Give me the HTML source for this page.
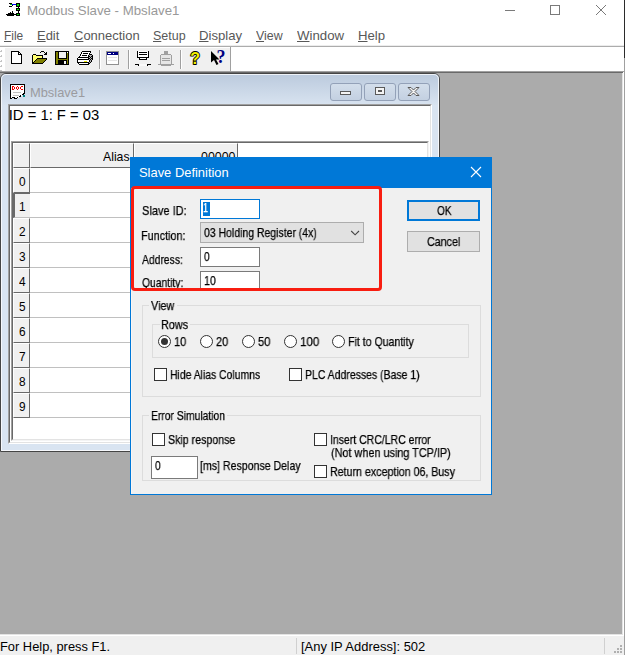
<!DOCTYPE html>
<html><head><meta charset="utf-8">
<style>
*{box-sizing:border-box;margin:0;padding:0}
html,body{width:625px;height:655px;overflow:hidden;background:#fff}
body{position:relative;font-family:"Liberation Sans",sans-serif;color:#000}
.a{position:absolute}
.t{position:absolute;display:block;white-space:nowrap;line-height:1;transform-origin:0 0}
.t u{text-decoration:underline;text-decoration-thickness:1px;text-underline-offset:1px}
svg{position:absolute;overflow:visible}
.cr{shape-rendering:crispEdges}
.inp{position:absolute;background:#fff;border:1px solid #7a7a7a}
.btn{position:absolute;background:#e1e1e1;border:1px solid #adadad}
.grp{position:absolute;border:1px solid #dcdcdc}
.lbg{position:absolute;background:#f0f0f0;height:12px}
.cb{position:absolute;width:13px;height:13px;background:#fff;border:1px solid #333}
.rb{position:absolute;width:13px;height:13px;background:#fff;border:1px solid #333;border-radius:50%}
.hc{position:absolute;background:#f0f0f0;border-right:1px solid #696969;border-bottom:1px solid #696969;border-top:1px solid #fff;border-left:1px solid #fff}
.hl{position:absolute;height:1px;background:#c0c0c0}
.sep{position:absolute;top:50px;width:2px;height:19px;border-left:1px solid #a0a0a0;border-right:1px solid #fff}
</style></head><body>
<!-- ===== main window chrome ===== -->
<svg class="cr" style="left:0;top:0" width="625" height="24">
  <!-- app icon -->
  <rect x="9" y="3" width="3" height="1" fill="#000"/><rect x="9" y="6" width="3" height="1" fill="#000"/>
  <rect x="10" y="4" width="2" height="1" fill="#00c000"/><rect x="12" y="5" width="1" height="1" fill="#000"/>
  <rect x="12" y="4" width="4" height="1" fill="#0000ff"/>
  <rect x="16" y="3" width="4" height="4" fill="#000"/><rect x="17" y="4" width="2" height="2" fill="#00e000"/>
  <rect x="18" y="7" width="1" height="1" fill="#000"/>
  <rect x="16" y="8" width="4" height="3" fill="#000"/><rect x="17" y="9" width="2" height="1" fill="#00e000"/>
  <rect x="18" y="11" width="1" height="2" fill="#000"/>
  <rect x="16" y="13" width="4" height="3" fill="#000"/><rect x="17" y="14" width="2" height="1" fill="#00e000"/>
  <rect x="6" y="14" width="10" height="1" fill="#000"/><rect x="7" y="15" width="7" height="1" fill="#000"/>
  <rect x="8" y="13" width="6" height="1" fill="#000"/><rect x="10" y="12" width="1" height="1" fill="#000"/><rect x="12" y="11" width="1" height="2" fill="#000"/>
  <!-- caption buttons -->
  <rect x="505" y="10" width="10" height="1" fill="#7a7a7a"/>
  <rect x="550.5" y="5.5" width="9" height="9" fill="none" stroke="#7a7a7a" stroke-width="1"/>
</svg>
<svg style="left:596px;top:5px" width="10" height="10"><path d="M0 0L10 10M10 0L0 10" stroke="#7a7a7a" stroke-width="1" fill="none"/></svg>
<div class="a" style="left:0;top:45px;width:624px;height:1px;background:#ececec"></div>
<div class="a" style="left:0;top:46px;width:624px;height:1px;background:#acacac"></div>
<!-- toolbar -->
<div class="a" style="left:5px;top:48px;width:225px;height:23px;background:#f0f0f0"></div>
<div class="a" style="left:230px;top:47px;width:1px;height:24px;background:#a0a0a0"></div>
<svg class="cr" style="left:0;top:47px" width="232" height="24">
<!-- gripper -->
<g fill="#c4c4c4"><rect x="0" y="4" width="2" height="1"/><rect x="1" y="3" width="1" height="1"/><rect x="0" y="9" width="2" height="1"/><rect x="1" y="8" width="1" height="1"/><rect x="0" y="14" width="2" height="1"/><rect x="1" y="13" width="1" height="1"/><rect x="0" y="19" width="2" height="1"/><rect x="1" y="18" width="1" height="1"/><rect x="0" y="23" width="2" height="1"/></g>
<!-- new -->
<path d="M11.500 4.500H18.500L21.500 7.500V16.500H11.500Z" fill="#fff" stroke="#000" stroke-width="1"/>
<path d="M18.500 4.500V7.500H21.500" fill="none" stroke="#000" stroke-width="1"/>
<!-- open -->
<path d="M33 8H42V11H37L33 15Z" fill="#ffff70"/>
<g fill="#000"><rect x="32" y="8" width="1" height="9"/><rect x="33" y="7" width="3" height="1"/><rect x="36" y="8" width="7" height="1"/><rect x="42" y="8" width="1" height="3"/></g>
<path d="M33 16L37 12H47L43 16Z" fill="#808000"/>
<g fill="#000"><rect x="37" y="11" width="10" height="1"/><rect x="32" y="16" width="11" height="1"/>
<rect x="36" y="12" width="1" height="1"/><rect x="35" y="13" width="1" height="1"/><rect x="34" y="14" width="1" height="1"/><rect x="33" y="15" width="1" height="1"/>
<rect x="46" y="12" width="1" height="1"/><rect x="45" y="13" width="1" height="1"/><rect x="44" y="14" width="1" height="1"/><rect x="43" y="15" width="1" height="1"/>
<rect x="40" y="5" width="1" height="1"/><rect x="41" y="4" width="3" height="1"/><rect x="44" y="5" width="1" height="1"/><rect x="45" y="6" width="1" height="2"/>
<rect x="46" y="5" width="1" height="3"/><rect x="44" y="7" width="1" height="1"/></g>
<!-- save -->
<rect x="55" y="4" width="14" height="14" fill="#000"/>
<rect x="56" y="5" width="12" height="12" fill="#808000"/>
<rect x="58" y="4" width="9" height="8" fill="#000"/>
<rect x="59" y="5" width="7" height="6" fill="#f2f2f2"/>
<rect x="67" y="5" width="1" height="1" fill="#fff"/>
<rect x="58" y="13" width="9" height="5" fill="#000"/>
<rect x="64" y="14" width="2" height="3" fill="#f4f4f4"/>
<!-- print -->
<path d="M82 5H90L88 10H79Z" fill="#fff"/>
<rect x="78" y="11" width="11" height="6" fill="#fff"/>
<path d="M89 8H92V13L89 17Z" fill="#b0b0b0"/>
<g fill="#000">
<rect x="82" y="4" width="9" height="1"/><rect x="81" y="5" width="1" height="2"/><rect x="90" y="5" width="1" height="1"/>
<rect x="83" y="6" width="5" height="1"/><rect x="89" y="6" width="1" height="2"/><rect x="80" y="7" width="1" height="2"/>
<rect x="82" y="8" width="5" height="1"/><rect x="88" y="8" width="1" height="2"/><rect x="79" y="9" width="1" height="1"/>
<rect x="78" y="10" width="11" height="1"/><rect x="77" y="11" width="1" height="5"/><rect x="88" y="11" width="1" height="1"/>
<rect x="77" y="12" width="12" height="1"/><rect x="89" y="13" width="1" height="2"/><rect x="77" y="15" width="12" height="1"/>
<rect x="78" y="16" width="1" height="1"/><rect x="88" y="16" width="1" height="1"/><rect x="79" y="17" width="10" height="1"/>
<rect x="90" y="7" width="2" height="1"/><rect x="92" y="8" width="1" height="5"/><rect x="91" y="13" width="1" height="2"/><rect x="90" y="15" width="1" height="1"/><rect x="89" y="16" width="1" height="1"/>
<rect x="89" y="9" width="1" height="1"/><rect x="91" y="9" width="1" height="1"/><rect x="90" y="10" width="1" height="1"/><rect x="89" y="11" width="1" height="1"/><rect x="91" y="11" width="1" height="1"/><rect x="90" y="12" width="1" height="1"/>
</g>
<rect x="84" y="14" width="3" height="1" fill="#e8e800"/>
<!-- window -->
<rect x="106.500" y="4.500" width="12" height="13" fill="#fff" stroke="#909090" stroke-width="1"/>
<rect x="107" y="5" width="11" height="3" fill="#000080"/>
<rect x="108" y="6" width="3" height="1" fill="#fff"/><rect x="113" y="6" width="1" height="1" fill="#fff"/>
<rect x="108" y="10" width="9" height="1" fill="#e4e4e4"/><rect x="108" y="13" width="9" height="1" fill="#e4e4e4"/>
<!-- connect -->
<rect x="138" y="4" width="10" height="6" fill="#fff"/><rect x="140" y="11" width="6" height="1" fill="#fff"/><rect x="139" y="17" width="8" height="2" fill="#fafafa"/>
<g fill="#000"><rect x="137" y="4" width="1" height="7"/><rect x="148" y="4" width="1" height="7"/><rect x="137" y="10" width="12" height="1"/>
<rect x="139" y="5" width="8" height="1"/><rect x="139" y="7" width="8" height="1"/>
<rect x="139" y="11" width="1" height="2"/><rect x="146" y="11" width="1" height="2"/><rect x="139" y="12" width="8" height="1"/>
<rect x="135" y="17" width="4" height="1"/><rect x="138" y="18" width="1" height="1"/><rect x="147" y="17" width="4" height="1"/><rect x="147" y="18" width="1" height="1"/></g>
<!-- disconnect (disabled) -->
<rect x="161" y="8" width="10" height="9" fill="#e6e6e6"/>
<g fill="#a0a0a0"><rect x="164" y="4" width="4" height="3"/><rect x="161" y="7" width="10" height="1"/><rect x="160" y="8" width="1" height="9"/><rect x="171" y="8" width="1" height="9"/>
<rect x="162" y="11" width="8" height="1"/><rect x="162" y="13" width="8" height="1"/><rect x="158" y="17" width="16" height="1"/><rect x="161" y="18" width="10" height="1"/></g>
</svg>
<!-- help icons -->
<svg style="left:186px;top:47px" width="46" height="24">
<text x="4.200" y="17.200" font-family="Liberation Sans, sans-serif" font-weight="bold" font-size="16" fill="#f4f000" stroke="#000" stroke-width="1.800" stroke-linejoin="round" paint-order="stroke fill">?</text>
<path d="M25 4V15.500L28 13L30.500 18L32.500 17L30 12.500H33.500Z" fill="#000"/>
<text x="30.400" y="15.900" font-family="Liberation Serif, serif" font-weight="bold" font-size="18" fill="#000080">?</text>
</svg>

<div class="sep" style="left:99px"></div>
<div class="sep" style="left:128px"></div>
<div class="sep" style="left:180px"></div>
<!-- mdi client -->
<div class="a" style="left:0;top:71px;width:624px;height:1px;background:#a0a0a0"></div>
<div class="a" style="left:0;top:72px;width:623px;height:1px;background:#696969"></div>
<div class="a" style="left:0;top:73px;width:622px;height:561px;background:#ababab"></div>
<div class="a" style="left:0;top:634px;width:623px;height:1px;background:#e3e3e3"></div>
<div class="a" style="left:622px;top:73px;width:1px;height:562px;background:#e3e3e3"></div>
<!-- status bar -->
<div class="a" style="left:0;top:636px;width:624px;height:19px;background:#f0f0f0"></div>
<div class="a" style="left:296px;top:638px;width:1px;height:16px;background:#d0d0d0"></div>
<div class="a" style="left:604px;top:638px;width:1px;height:16px;background:#d0d0d0"></div>
<svg class="cr" style="left:612px;top:643px" width="12" height="12">
  <g fill="#b0b0b0"><rect x="8" y="2" width="2" height="2"/><rect x="5" y="5" width="2" height="2"/><rect x="8" y="5" width="2" height="2"/><rect x="2" y="8" width="2" height="2"/><rect x="5" y="8" width="2" height="2"/><rect x="8" y="8" width="2" height="2"/></g>
</svg>
<div class="a" style="left:624px;top:0;width:1px;height:58px;background:#2b2b2b"></div>
<div class="a" style="left:624px;top:58px;width:1px;height:597px;background:#a0a0a0"></div>

<!-- ===== child window ===== -->
<div class="a" style="left:0;top:73px;width:440px;height:379px;border:1px solid #454545;border-radius:6px 6px 0 0;background:#d9e4f1;overflow:hidden">
  <div class="a" style="left:0;top:0;width:438px;height:31px;background:linear-gradient(#bbcadd,#d8e3f0)"></div>
  <div class="a" style="left:0;top:0;width:438px;height:377px;border:1px solid rgba(255,255,255,.75);border-radius:5px 5px 0 0"></div>
  <!-- doc icon -->
  <svg class="cr" style="left:9px;top:10px" width="16" height="16">
    <path d="M0.500 0.500H14.500V9.500L12.500 10.500L11.500 11.500L9.500 12.500L8.500 13.500L5.500 14.500L3.500 13.500L0.500 14.500Z" fill="#fff" stroke="#000" stroke-width="1"/>
    <g fill="#f00000">
    <rect x="2" y="2" width="1" height="4"/><rect x="3" y="2" width="1" height="1"/><rect x="3" y="5" width="1" height="1"/><rect x="4" y="3" width="1" height="2"/>
    <rect x="6" y="3" width="1" height="2"/><rect x="7" y="2" width="1" height="1"/><rect x="7" y="5" width="1" height="1"/><rect x="8" y="3" width="1" height="2"/>
    <rect x="10" y="3" width="1" height="2"/><rect x="11" y="2" width="2" height="1"/><rect x="11" y="5" width="2" height="1"/>
    </g>
    <rect x="3" y="8" width="8" height="1" fill="#c0c0c0"/><rect x="3" y="11" width="6" height="1" fill="#c0c0c0"/>
    <rect x="13" y="11" width="2" height="2" fill="#008080"/>
  </svg>
  <!-- caption buttons -->
  <div class="a" style="left:329px;top:9px;width:32px;height:18px;border:1px solid #93a1b8;border-radius:3px;background:linear-gradient(#d3deeb,#c3d0e1)"></div>
  <div class="a" style="left:363px;top:9px;width:32px;height:18px;border:1px solid #93a1b8;border-radius:3px;background:linear-gradient(#d3deeb,#c3d0e1)"></div>
  <div class="a" style="left:397px;top:9px;width:32px;height:18px;border:1px solid #93a1b8;border-radius:3px;background:linear-gradient(#d3deeb,#c3d0e1)"></div>
  <svg style="left:329px;top:9px" width="100" height="19">
    <rect x="10.5" y="8.500" width="10" height="3" fill="#f4f4f4" stroke="#5a5a5a" stroke-width="1"/>
    <rect x="45.5" y="4.500" width="9" height="7" fill="#f4f4f4" stroke="#5a5a5a" stroke-width="1"/>
    <rect x="48.5" y="7.500" width="3" height="1" fill="#d9e4f1" stroke="#5a5a5a" stroke-width="1"/>
    <path d="M78 4.500h3l2.5 2.500 2.500-2.500h3l-4 4 4 4h-3l-2.500-2.500-2.500 2.500h-3l4-4z" fill="#f4f4f4" stroke="#5a5a5a" stroke-width="1"/>
  </svg>
</div>
<!-- view client with sunken edge -->
<div class="a" style="left:8px;top:104px;width:424px;height:340px;background:#fff;border-top:1px solid #a0a0a0;border-left:1px solid #a0a0a0;border-right:1px solid #fff;border-bottom:1px solid #fff"></div>
<div class="a" style="left:9px;top:105px;width:422px;height:338px;background:#fff;border-top:1px solid #696969;border-left:1px solid #696969;border-right:1px solid #e3e3e3;border-bottom:1px solid #e3e3e3"></div>
<!-- grid control -->
<div class="a" style="left:11px;top:141px;width:418px;height:300px;background:#fff;border-top:1px solid #a0a0a0;border-left:1px solid #a0a0a0;border-right:1px solid #f4f4f4;border-bottom:1px solid #f4f4f4"></div>
<div class="a" style="left:12px;top:142px;width:416px;height:298px;background:#fff;border-top:1px solid #696969;border-left:1px solid #696969;border-right:1px solid #e3e3e3;border-bottom:1px solid #e3e3e3"></div>
<!-- header cells -->
<div class="hc" style="left:13px;top:143px;width:17px;height:25px"></div>
<div class="hc" style="left:30px;top:143px;width:104px;height:25px"></div>
<div class="hc" style="left:134px;top:143px;width:104px;height:25px"></div>
<div class="hc" style="left:13px;top:168px;width:17px;height:25px"></div>
<div class="hl" style="left:30px;top:192px;width:397px"></div>
<div class="a" style="left:13px;top:193px;width:17px;height:25px;background:#f0f0f0;border-top:1px solid #696969;border-left:2px solid #696969;border-bottom:1px solid #c0c0c0"></div>
<div class="hl" style="left:30px;top:217px;width:397px"></div>
<div class="hc" style="left:13px;top:218px;width:17px;height:25px"></div>
<div class="hl" style="left:30px;top:242px;width:397px"></div>
<div class="hc" style="left:13px;top:243px;width:17px;height:25px"></div>
<div class="hl" style="left:30px;top:267px;width:397px"></div>
<div class="hc" style="left:13px;top:268px;width:17px;height:25px"></div>
<div class="hl" style="left:30px;top:292px;width:397px"></div>
<div class="hc" style="left:13px;top:293px;width:17px;height:25px"></div>
<div class="hl" style="left:30px;top:317px;width:397px"></div>
<div class="hc" style="left:13px;top:318px;width:17px;height:25px"></div>
<div class="hl" style="left:30px;top:342px;width:397px"></div>
<div class="hc" style="left:13px;top:343px;width:17px;height:25px"></div>
<div class="hl" style="left:30px;top:367px;width:397px"></div>
<div class="hc" style="left:13px;top:368px;width:17px;height:25px"></div>
<div class="hl" style="left:30px;top:392px;width:397px"></div>
<div class="hc" style="left:13px;top:393px;width:17px;height:25px"></div>
<div class="hl" style="left:30px;top:417px;width:397px"></div>
<span class="t" style="left:26.55px;top:4.5px;font-size:12.4px;color:#999;transform:scaleX(1.069);">Modbus Slave - Mbslave1</span>
<span class="t" style="left:3.65px;top:28.8px;font-size:13.2px;color:#585858;transform:scaleX(0.904);"><u>F</u>ile</span>
<span class="t" style="left:36.65px;top:28.8px;font-size:13.2px;color:#585858;transform:scaleX(0.983);"><u>E</u>dit</span>
<span class="t" style="left:73.70px;top:28.8px;font-size:13.2px;color:#585858;transform:scaleX(0.984);"><u>C</u>onnection</span>
<span class="t" style="left:152.60px;top:28.8px;font-size:13.2px;color:#585858;transform:scaleX(0.945);"><u>S</u>etup</span>
<span class="t" style="left:198.60px;top:28.8px;font-size:13.2px;color:#585858;transform:scaleX(0.997);"><u>D</u>isplay</span>
<span class="t" style="left:255.70px;top:28.8px;font-size:13.2px;color:#585858;transform:scaleX(0.939);"><u>V</u>iew</span>
<span class="t" style="left:296.50px;top:28.8px;font-size:13.2px;color:#585858;transform:scaleX(1.004);"><u>W</u>indow</span>
<span class="t" style="left:357.70px;top:28.8px;font-size:13.2px;color:#585858;transform:scaleX(0.999);"><u>H</u>elp</span>
<span class="t" style="left:-0.50px;top:640.7px;font-size:12.2px;color:#000;transform:scaleX(1.055);">For Help, press F1.</span>
<span class="t" style="left:300.70px;top:640.7px;font-size:12.2px;color:#000;transform:scaleX(1.062);">[Any IP Address]: 502</span>
<span class="t" style="left:29.55px;top:86.5px;font-size:12.4px;color:#9b9b9f;transform:scaleX(1.038);">Mbslave1</span>
<span class="t" style="left:8.75px;top:107.5px;font-size:14.8px;color:#000;transform:scaleX(1.000);">ID = 1: F = 03</span>
<span class="t" style="left:102.50px;top:150.5px;font-size:12.4px;color:#000;transform:scaleX(0.988);">Alias</span>
<span class="t" style="left:200.50px;top:150.5px;font-size:12.4px;color:#000;transform:scaleX(0.999);">00000</span>
<span class="t" style="left:18.50px;top:176.3px;font-size:12.6px;color:#000;transform:scaleX(0.941);">0</span>
<span class="t" style="left:18.50px;top:201.3px;font-size:12.6px;color:#000;transform:scaleX(0.941);">1</span>
<span class="t" style="left:18.50px;top:226.3px;font-size:12.6px;color:#000;transform:scaleX(0.941);">2</span>
<span class="t" style="left:18.50px;top:251.3px;font-size:12.6px;color:#000;transform:scaleX(0.941);">3</span>
<span class="t" style="left:18.50px;top:276.3px;font-size:12.6px;color:#000;transform:scaleX(0.941);">4</span>
<span class="t" style="left:18.50px;top:301.3px;font-size:12.6px;color:#000;transform:scaleX(0.941);">5</span>
<span class="t" style="left:18.50px;top:326.3px;font-size:12.6px;color:#000;transform:scaleX(0.941);">6</span>
<span class="t" style="left:18.50px;top:351.3px;font-size:12.6px;color:#000;transform:scaleX(0.941);">7</span>
<span class="t" style="left:18.50px;top:376.3px;font-size:12.6px;color:#000;transform:scaleX(0.941);">8</span>
<span class="t" style="left:18.50px;top:401.3px;font-size:12.6px;color:#000;transform:scaleX(0.941);">9</span>

<!-- ===== dialog ===== -->
<div class="a" style="left:130px;top:157px;width:362px;height:338px;background:#f0f0f0;border:1px solid #0078d7"></div>
<div class="a" style="left:131px;top:188px;width:360px;height:306px;border-left:1px solid #fbf6f4;border-top:0"></div>
<div class="a" style="left:130px;top:157px;width:362px;height:31px;background:#0078d7"></div>
<svg style="left:471px;top:167px" width="10" height="10"><path d="M0 0L10 10M10 0L0 10" stroke="#fff" stroke-width="1.1" fill="none"/></svg>
<!-- inputs -->
<div class="inp" style="left:200px;top:199px;width:60px;height:20px;border-color:#0078d7"></div>
<div class="a" style="left:203px;top:202px;width:7px;height:14px;background:#0078d7"></div>
<div class="btn" style="left:200px;top:222px;width:164px;height:21px"></div>
<svg style="left:350px;top:230px" width="10" height="6"><path d="M1.200 1L5.100 4.800L9 1" stroke="#444" stroke-width="1.1" fill="none"/></svg>
<div class="inp" style="left:200px;top:247px;width:60px;height:20px"></div>
<div class="inp" style="left:200px;top:271px;width:60px;height:20px"></div>
<div class="btn" style="left:407px;top:200px;width:73px;height:21px;border:2px solid #0078d7"></div>
<div class="btn" style="left:407px;top:231px;width:73px;height:21px"></div>
<!-- groups -->
<div class="grp" style="left:142px;top:305px;width:339px;height:92px"></div>
<div class="lbg" style="left:149px;top:300px;width:28px"></div>
<div class="grp" style="left:152px;top:324px;width:317px;height:34px"></div>
<div class="lbg" style="left:160px;top:319px;width:30px"></div>
<div class="grp" style="left:142px;top:415px;width:339px;height:66px"></div>
<div class="lbg" style="left:149px;top:410px;width:78px"></div>
<!-- radios -->
<div class="rb" style="left:158px;top:335px"></div><div class="a" style="left:161px;top:338px;width:7px;height:7px;border-radius:50%;background:#333"></div>
<div class="rb" style="left:200px;top:335px"></div>
<div class="rb" style="left:242px;top:335px"></div>
<div class="rb" style="left:284px;top:335px"></div>
<div class="rb" style="left:332px;top:335px"></div>
<!-- checkboxes -->
<div class="cb" style="left:154px;top:368px"></div>
<div class="cb" style="left:289px;top:368px"></div>
<div class="cb" style="left:152px;top:433px"></div>
<div class="cb" style="left:314px;top:433px"></div>
<div class="cb" style="left:314px;top:465px"></div>
<div class="inp" style="left:151px;top:456px;width:47px;height:23px"></div>
<span class="t" style="left:138.60px;top:166.5px;font-size:12.4px;color:#fff;transform:scaleX(1.042);">Slave Definition</span>
<span class="t" style="left:141.60px;top:205.3px;font-size:12.6px;color:#000;transform:scaleX(0.875);will-change:transform;-webkit-text-stroke:0.25px;">Slave ID:</span>
<span class="t" style="left:140.50px;top:230.3px;font-size:12.6px;color:#000;transform:scaleX(0.859);will-change:transform;-webkit-text-stroke:0.25px;">Function:</span>
<span class="t" style="left:141.50px;top:254.3px;font-size:12.6px;color:#000;transform:scaleX(0.822);will-change:transform;-webkit-text-stroke:0.25px;">Address:</span>
<span class="t" style="left:141.60px;top:277.3px;font-size:12.6px;color:#000;transform:scaleX(0.820);will-change:transform;-webkit-text-stroke:0.25px;">Quantity:</span>
<span class="t" style="left:203.70px;top:227.3px;font-size:12.6px;color:#000;transform:scaleX(0.831);will-change:transform;-webkit-text-stroke:0.25px;">03 Holding Register (4x)</span>
<span class="t" style="left:203.55px;top:251.3px;font-size:12.6px;color:#000;transform:scaleX(0.798);will-change:transform;-webkit-text-stroke:0.25px;">0</span>
<span class="t" style="left:203.70px;top:275.3px;font-size:12.6px;color:#000;transform:scaleX(0.847);will-change:transform;-webkit-text-stroke:0.25px;">10</span>
<span class="t" style="left:202.50px;top:202.3px;font-size:12.6px;color:#fff;transform:scaleX(0.713);will-change:transform;-webkit-text-stroke:0.25px;">1</span>
<span class="t" style="left:436.55px;top:205.3px;font-size:12.6px;color:#000;transform:scaleX(0.802);will-change:transform;-webkit-text-stroke:0.25px;">OK</span>
<span class="t" style="left:426.60px;top:236.3px;font-size:12.6px;color:#000;transform:scaleX(0.849);will-change:transform;-webkit-text-stroke:0.25px;">Cancel</span>
<span class="t" style="left:150.55px;top:300.3px;font-size:12.6px;color:#000;transform:scaleX(0.859);will-change:transform;-webkit-text-stroke:0.25px;">View</span>
<span class="t" style="left:160.50px;top:319.3px;font-size:12.6px;color:#000;transform:scaleX(0.859);will-change:transform;-webkit-text-stroke:0.25px;">Rows</span>
<span class="t" style="left:173.50px;top:336.3px;font-size:12.6px;color:#000;transform:scaleX(0.875);will-change:transform;-webkit-text-stroke:0.25px;">10</span>
<span class="t" style="left:215.60px;top:336.3px;font-size:12.6px;color:#000;transform:scaleX(0.874);will-change:transform;-webkit-text-stroke:0.25px;">20</span>
<span class="t" style="left:257.60px;top:336.3px;font-size:12.6px;color:#000;transform:scaleX(0.885);will-change:transform;-webkit-text-stroke:0.25px;">50</span>
<span class="t" style="left:299.55px;top:336.3px;font-size:12.6px;color:#000;transform:scaleX(0.919);will-change:transform;-webkit-text-stroke:0.25px;">100</span>
<span class="t" style="left:347.60px;top:336.3px;font-size:12.6px;color:#000;transform:scaleX(0.840);will-change:transform;-webkit-text-stroke:0.25px;">Fit to Quantity</span>
<span class="t" style="left:169.50px;top:369.3px;font-size:12.6px;color:#000;transform:scaleX(0.825);will-change:transform;-webkit-text-stroke:0.25px;">Hide Alias Columns</span>
<span class="t" style="left:304.50px;top:369.3px;font-size:12.6px;color:#000;transform:scaleX(0.831);will-change:transform;-webkit-text-stroke:0.25px;">PLC Addresses (Base 1)</span>
<span class="t" style="left:150.55px;top:410.3px;font-size:12.6px;color:#000;transform:scaleX(0.819);will-change:transform;-webkit-text-stroke:0.25px;">Error Simulation</span>
<span class="t" style="left:167.50px;top:434.3px;font-size:12.6px;color:#000;transform:scaleX(0.843);will-change:transform;-webkit-text-stroke:0.25px;">Skip response</span>
<span class="t" style="left:154.55px;top:460.3px;font-size:12.6px;color:#000;transform:scaleX(0.798);will-change:transform;-webkit-text-stroke:0.25px;">0</span>
<span class="t" style="left:199.65px;top:460.3px;font-size:12.6px;color:#000;transform:scaleX(0.840);will-change:transform;-webkit-text-stroke:0.25px;">[ms] Response Delay</span>
<span class="t" style="left:329.55px;top:434.3px;font-size:12.6px;color:#000;transform:scaleX(0.832);will-change:transform;-webkit-text-stroke:0.25px;">Insert CRC/LRC error</span>
<span class="t" style="left:330.50px;top:447.3px;font-size:12.6px;color:#000;transform:scaleX(0.861);will-change:transform;-webkit-text-stroke:0.25px;">(Not when using TCP/IP)</span>
<span class="t" style="left:329.55px;top:466.3px;font-size:12.6px;color:#000;transform:scaleX(0.846);will-change:transform;-webkit-text-stroke:0.25px;">Return exception 06, Busy</span>
<!-- red highlight -->
<div class="a" style="left:131px;top:186px;width:251px;height:105px;border:3px solid #f81d10;border-radius:4px"></div>
</body></html>
